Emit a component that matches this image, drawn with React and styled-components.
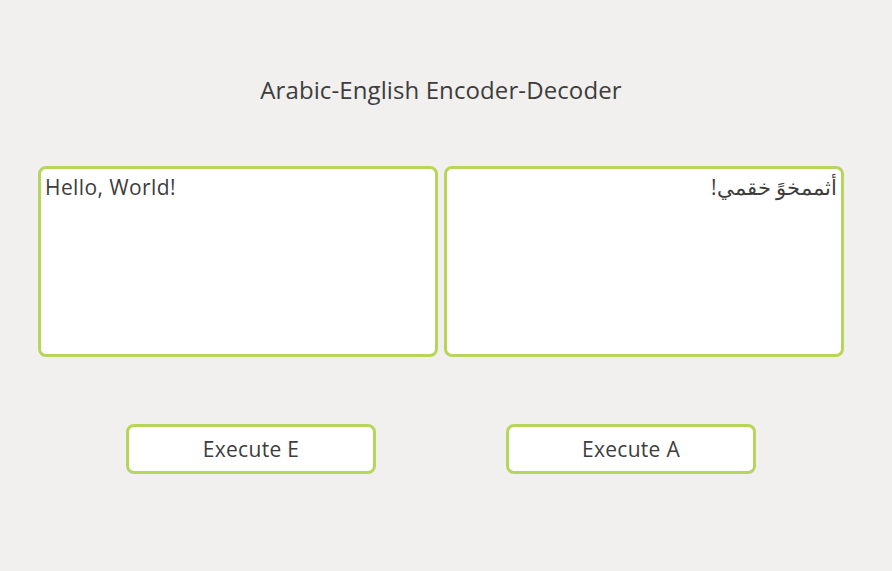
import React, { useState } from 'react'
import styled, { createGlobalStyle } from 'styled-components'

const GlobalStyle = createGlobalStyle`
  html, body {
    margin: 0;
    padding: 0;
    background: #f1f0ee;
  }
  body {
    font-family: "Open Sans", "Noto Sans", sans-serif;
    color: #3d3d3d;
  }
`

const Page = styled.div`
  width: 892px;
  height: 571px;
  box-sizing: border-box;
  padding: 74px 0 0 38px;
  overflow: hidden;
`

const Title = styled.h1`
  margin: 0;
  width: 806px;
  text-align: center;
  font-size: 24px;
  font-weight: 400;
  line-height: 32px;
  color: #3d3d3d;
  letter-spacing: 0.1px;
`

const Boxes = styled.div`
  display: flex;
  gap: 6px;
  margin-top: 60px;
`

const TextBox = styled.textarea`
  width: 400px;
  height: 191px;
  box-sizing: border-box;
  border: 3px solid #b7d55a;
  border-radius: 8px;
  background: #fff;
  padding: 4px 4px;
  resize: none;
  outline: none;
  font-family: "Open Sans", "Noto Sans", sans-serif;
  font-size: 21px;
  line-height: 28px;
  letter-spacing: 0.4px;
  color: #3d3d3d;
  direction: ${p => (p.$rtl ? 'rtl' : 'ltr')};
`

const Buttons = styled.div`
  display: flex;
  gap: 130px;
  margin: 67px 0 0 88px;
`

const Button = styled.button`
  width: 250px;
  height: 50px;
  box-sizing: border-box;
  border: 3px solid #b7d55a;
  border-radius: 8px;
  background: #fff;
  font-family: "Open Sans", "Noto Sans", sans-serif;
  font-size: 21px;
  letter-spacing: 0.3px;
  color: #3d3d3d;
  cursor: pointer;
  padding: 0;
`

export default function App() {
  const [left, setLeft] = useState('Hello, World!')
  const [right, setRight] = useState('أثممخوً خقمي!')

  return (
    <>
      <GlobalStyle />
      <Page>
        <Title>Arabic-English Encoder-Decoder</Title>
        <Boxes>
          <TextBox value={left} onChange={e => setLeft(e.target.value)} />
          <TextBox $rtl value={right} onChange={e => setRight(e.target.value)} />
        </Boxes>
        <Buttons>
          <Button>Execute E</Button>
          <Button>Execute A</Button>
        </Buttons>
      </Page>
    </>
  )
}
